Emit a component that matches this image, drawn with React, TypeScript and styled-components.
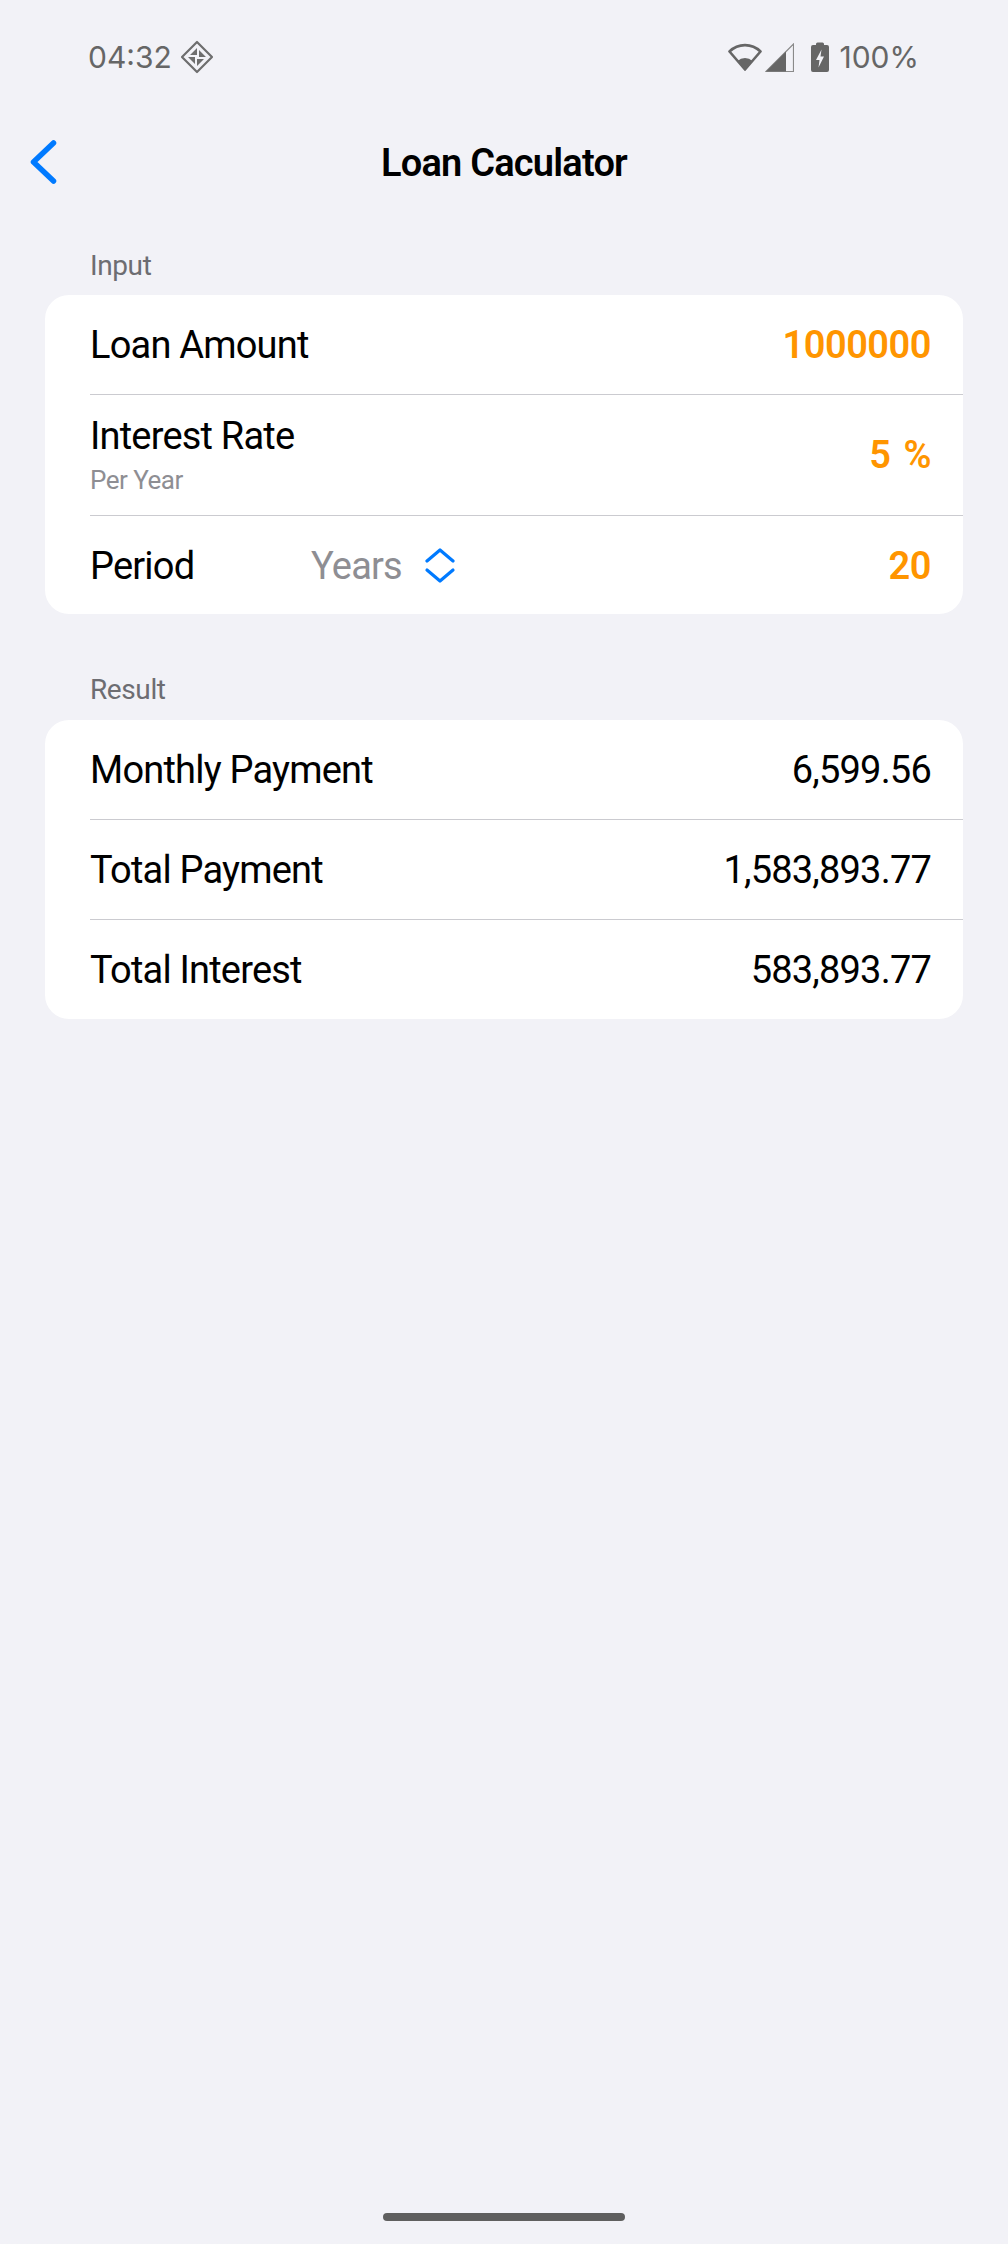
import styled, { createGlobalStyle } from 'styled-components';

const GlobalStyle = createGlobalStyle`
  html, body {
    margin: 0;
    padding: 0;
    background: #f2f2f7;
    font-family: Roboto, "Liberation Sans", sans-serif;
  }
`;

const Page = styled.div`
  display: flex;
  flex-direction: column;
  width: 1008px;
  height: 2244px;
  overflow: hidden;
  background: #f2f2f7;
`;

const StatusBar = styled.div`
  display: flex;
  align-items: center;
  justify-content: space-between;
  height: 40px;
  margin-top: 37px;
  padding: 0 89px 0 88px;
  color: #666666;
`;

const StatusGroup = styled.div`
  display: flex;
  align-items: center;
`;

const StatusText = styled.span`
  font-family: Inter, Roboto, sans-serif;
  font-size: 30px;
`;

const NavBar = styled.div`
  position: relative;
  display: flex;
  align-items: center;
  justify-content: center;
  height: 88px;
  margin-top: 42px;
`;

const BackButton = styled.button`
  position: absolute;
  left: 29px;
  top: 20px;
  display: flex;
  padding: 0;
  border: 0;
  background: none;
`;

const Title = styled.h1`
  margin: 0;
  font-size: 38px;
  font-weight: 600;
  letter-spacing: -0.8px;
  color: #000000;
`;

const SectionLabel = styled.div`
  padding-left: 90px;
  font-size: 28px;
  line-height: 36px;
  letter-spacing: -0.4px;
  color: #6d6d72;
`;

const InputLabel = styled(SectionLabel)`
  margin-top: 41px;
  margin-bottom: 11px;
`;

const ResultLabel = styled(SectionLabel)`
  margin-top: 58px;
  margin-bottom: 12px;
`;

const Card = styled.div`
  margin: 0 45px;
  background: #ffffff;
  border-radius: 24px;
  overflow: hidden;
`;

const Row = styled.div<{ $height: number; $nudge?: number }>`
  display: flex;
  align-items: center;
  height: ${p => p.$height - (p.$nudge || 0)}px;
  margin-left: 45px;
  padding-top: ${p => p.$nudge || 0}px;
  padding-right: 32px;
  &:not(:first-child) {
    border-top: 1px solid #cbcbd0;
  }
`;

const RowLabel = styled.span<{ $width?: number }>`
  font-size: 38px;
  letter-spacing: -0.8px;
  color: #000000;
  ${p => (p.$width ? `width: ${p.$width}px;` : '')}
`;

const LabelStack = styled.div`
  display: flex;
  flex-direction: column;
  padding-bottom: 2px;
`;

const SubLabel = styled.span`
  margin-top: 7px;
  font-size: 26px;
  line-height: 30px;
  letter-spacing: -0.5px;
  color: #8e8e93;
`;

const Picker = styled.div`
  display: flex;
  align-items: center;
  gap: 22px;
  font-size: 38px;
  letter-spacing: -0.8px;
  color: #8e8e93;
`;

const Value = styled.span`
  margin-left: auto;
  font-size: 38px;
  letter-spacing: -0.8px;
  color: #000000;
`;

const InputValue = styled(Value)`
  display: flex;
  gap: 13px;
  font-weight: 600;
  letter-spacing: -0.5px;
  color: #ff9500;
`;

const HomeBar = styled.div`
  flex: none;
  width: 242px;
  height: 8px;
  margin: auto auto 23px;
  border-radius: 4px;
  background: #5f5f5f;
`;

const results = [
  { label: 'Monthly Payment', value: '6,599.56' },
  { label: 'Total Payment', value: '1,583,893.77' },
  { label: 'Total Interest', value: '583,893.77' },
];

function DiamondIcon() {
  return (
    <svg width="34" height="34" viewBox="0 0 34 34" style={{ marginLeft: 8 }}>
      <path d="M17 2 L32 17 L17 32 L2 17 Z" fill="none" stroke="#6e6e6e" strokeWidth="2.2" strokeLinejoin="round" />
      <path d="M17 8 L17 15 L10 15 Z M26 17 L19 17 L19 10 Z M17 26 L17 19 L24 19 Z M8 17 L15 17 L15 24 Z" fill="#6e6e6e" />
    </svg>
  );
}

function WifiIcon() {
  return (
    <svg width="34" height="29" viewBox="0 0 34 29">
      <path d="M1.5 8.5 A 22 22 0 0 1 32.5 8.5 L17 26.5 Z" fill="none" stroke="#666666" strokeWidth="2.6" strokeLinejoin="round" />
      <path d="M9.5 18 A 11 11 0 0 1 24.5 18 L17 27.5 Z" fill="#666666" />
    </svg>
  );
}

function SignalIcon() {
  return (
    <svg width="29" height="29" viewBox="0 0 29 29" style={{ marginLeft: 3 }}>
      <path d="M1 28.5 L28.5 1 L28.5 28.5 Z" fill="none" stroke="#8a8a8a" strokeWidth="1.2" />
      <path d="M1 28.5 L21 8.5 L21 28.5 Z" fill="#666666" />
    </svg>
  );
}

function BatteryIcon() {
  return (
    <svg width="18" height="30" viewBox="0 0 18 30" style={{ marginLeft: 17, marginRight: 10 }}>
      <path d="M5 2 Q5 0.5 6.5 0.5 L11.5 0.5 Q13 0.5 13 2 L13 3 L16 3 Q18 3 18 5 L18 28 Q18 30 16 30 L2 30 Q0 30 0 28 L0 5 Q0 3 2 3 L5 3 Z" fill="#666666" />
      <path d="M10.5 7.5 L5 18 L8.5 18 L7.5 25.5 L13 14.5 L9.5 14.5 Z" fill="#f2f2f7" />
    </svg>
  );
}

function BackIcon() {
  return (
    <svg width="28" height="46" viewBox="0 0 28 46">
      <path d="M24.5 4 L4.5 23 L24.5 42" fill="none" stroke="#007aff" strokeWidth="5.5" strokeLinecap="round" strokeLinejoin="round" />
    </svg>
  );
}

function UpDownIcon() {
  return (
    <svg width="32" height="36" viewBox="0 0 32 36">
      <path d="M3 13 L16 2 L29 13" fill="none" stroke="#007aff" strokeWidth="3.2" strokeLinecap="round" strokeLinejoin="round" />
      <path d="M3 22 L16 33 L29 22" fill="none" stroke="#007aff" strokeWidth="3.2" strokeLinecap="round" strokeLinejoin="round" />
    </svg>
  );
}

export default function App() {
  return (
    <>
      <GlobalStyle />
      <Page>
        <StatusBar>
          <StatusGroup>
            <StatusText>04:32</StatusText>
            <DiamondIcon />
          </StatusGroup>
          <StatusGroup>
            <WifiIcon />
            <SignalIcon />
            <BatteryIcon />
            <StatusText>100%</StatusText>
          </StatusGroup>
        </StatusBar>
        <NavBar>
          <BackButton>
            <BackIcon />
          </BackButton>
          <Title>Loan Caculator</Title>
        </NavBar>
        <InputLabel>Input</InputLabel>
        <Card>
          <Row $height={99}>
            <RowLabel>Loan Amount</RowLabel>
            <InputValue>1000000</InputValue>
          </Row>
          <Row $height={120}>
            <LabelStack>
              <RowLabel>Interest Rate</RowLabel>
              <SubLabel>Per Year</SubLabel>
            </LabelStack>
            <InputValue>
              <span>5</span>
              <span>%</span>
            </InputValue>
          </Row>
          <Row $height={98} $nudge={2}>
            <RowLabel $width={221}>Period</RowLabel>
            <Picker>
              Years
              <UpDownIcon />
            </Picker>
            <InputValue>20</InputValue>
          </Row>
        </Card>
        <ResultLabel>Result</ResultLabel>
        <Card>
          {results.map(item => (
            <Row key={item.label} $height={99}>
              <RowLabel>{item.label}</RowLabel>
              <Value>{item.value}</Value>
            </Row>
          ))}
        </Card>
        <HomeBar />
      </Page>
    </>
  );
}
